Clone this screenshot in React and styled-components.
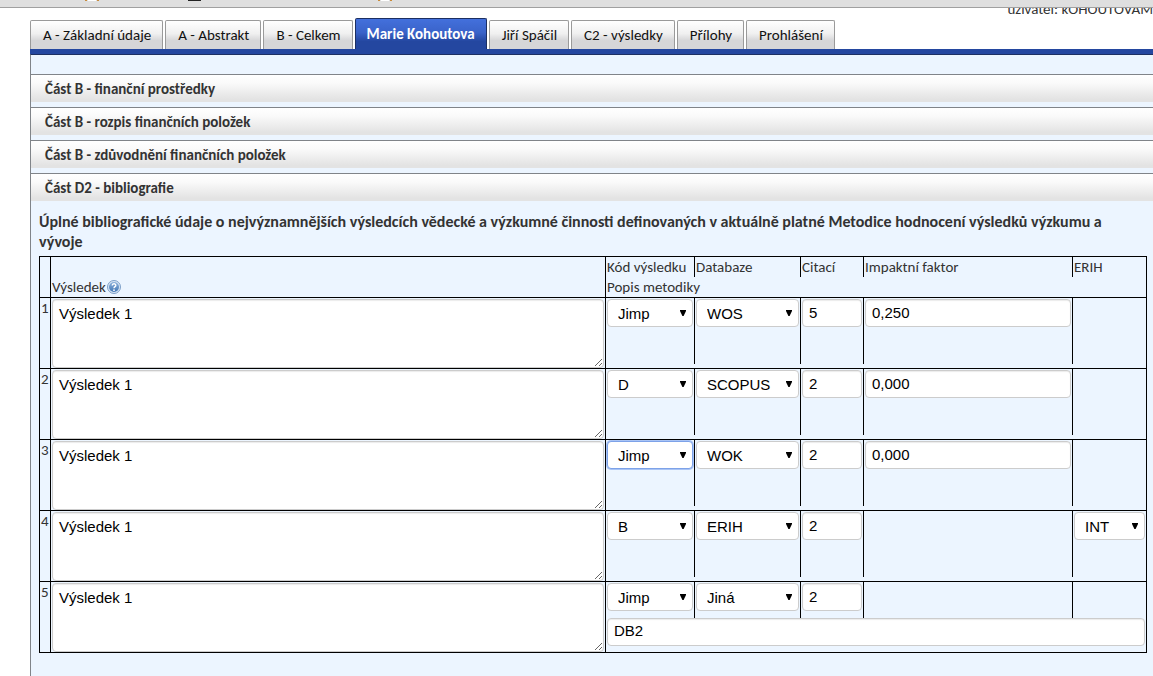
import React, { useState } from 'react';
import styled, { createGlobalStyle } from 'styled-components';

const tabs = [
    'A - Základní údaje',
    'A - Abstrakt',
    'B - Celkem',
    'Marie Kohoutova',
    'Jiří Spáčil',
    'C2 - výsledky',
    'Přílohy',
    'Prohlášení',
];

const sections = [
    'Část B - finanční prostředky',
    'Část B - rozpis finančních položek',
    'Část B - zdůvodnění finančních položek',
    'Část D2 - bibliografie',
];

const kinds = ['Jimp', 'D', 'B'];
const databases = ['WOS', 'SCOPUS', 'WOK', 'ERIH', 'Jiná'];
const erihs = ['INT', 'NAT'];

const results = [
    { text: 'Výsledek 1', kind: 'Jimp', database: 'WOS', citations: '5', impact: '0,250' },
    { text: 'Výsledek 1', kind: 'D', database: 'SCOPUS', citations: '2', impact: '0,000' },
    { text: 'Výsledek 1', kind: 'Jimp', database: 'WOK', citations: '2', impact: '0,000', active: true },
    { text: 'Výsledek 1', kind: 'B', database: 'ERIH', citations: '2', erih: 'INT' },
    { text: 'Výsledek 1', kind: 'Jimp', database: 'Jiná', citations: '2', other: 'DB2' },
];

function Dropdown({ label, value, options, active }) {
    return (
        <SelectBox>
            <Select aria-label={label} defaultValue={value} $active={active}>
                {options.map((option) => <option key={option}>{option}</option>)}
            </Select>
            <svg width="6" height="6" viewBox="0 0 6 6" aria-hidden="true">
                <path d="M0 0H6V1L3.6 6H2.4L0 1Z" fill="#000"/>
            </svg>
        </SelectBox>
    );
}

function HelpIcon() {
    return (
        <svg width="14" height="14" viewBox="0 0 14 14" aria-hidden="true">
            <defs>
                <linearGradient id="help" x1="0" y1="0" x2="0" y2="1">
                    <stop offset="0" stopColor="#8fb3dc"/>
                    <stop offset="1" stopColor="#4377b5"/>
                </linearGradient>
            </defs>
            <circle cx="7" cy="7" r="6.5" fill="#d8e5f3" stroke="#7d9fc8"/>
            <circle cx="7" cy="7" r="5" fill="url(#help)"/>
            <path d="M5.2 5.6C5.2 3.2 8.9 3.3 8.8 5.4C8.8 6.6 7 6.6 7 8.2" fill="none" stroke="#fff" strokeWidth="1.4"/>
            <circle cx="7" cy="10.2" r="0.9" fill="#fff"/>
        </svg>
    );
}

function Result({ item, number }) {
    return (
        <tbody>
            <Row $height={item.other ? 36 : 66}>
                <NumberCell rowSpan={2}>{number}</NumberCell>
                <td rowSpan={2}><TextArea aria-label="Výsledek" defaultValue={item.text}/></td>
                <td><Dropdown label="Kód výsledku" value={item.kind} options={kinds} active={item.active}/></td>
                <td><Dropdown label="Databaze" value={item.database} options={databases}/></td>
                <td><Input aria-label="Citací" defaultValue={item.citations}/></td>
                <td>{item.impact && <Input aria-label="Impaktní faktor" defaultValue={item.impact}/>}</td>
                <td>{item.erih && <Dropdown label="ERIH" value={item.erih} options={erihs}/>}</td>
            </Row>
            <Row $height={item.other ? 35 : 5}>
                <WideCell colSpan={5}>
                    {item.other && <Input aria-label="Popis metodiky" defaultValue={item.other}/>}
                </WideCell>
            </Row>
        </tbody>
    );
}

export default function App() {
    const [currentTab,setCurrentTab] = useState(3);
    const [open,setOpen] = useState(3);
    return (
        <Page>
            <GlobalStyle/>
            <TopBar>
                <svg width="310" height="2" viewBox="0 0 310 2" aria-hidden="true">
                    <path d="M0 0H2V1H0ZM12 0H14V1H12ZM293 0H295V1H293ZM305 0H307V1H305Z" fill="#c98b3a"/>
                    <path d="M3 0H11V1H3ZM296 0H304V1H296Z" fill="#fff"/>
                    <path d="M103 0H116V1H103Z" fill="#222"/>
                </svg>
            </TopBar>
            <UserLine><span>uživatel: kOHOUTOVAM</span></UserLine>
            <TabList role="tablist">
                {tabs.map((tab,index) => (
                    <Tab
                        key={tab}
                        type="button"
                        role="tab"
                        aria-selected={index === currentTab}
                        $selected={index === currentTab}
                        onClick={() => setCurrentTab(index)}
                    >
                        {tab}
                    </Tab>
                ))}
            </TabList>
            <Panel>
                {sections.map((section,index) => (
                    <SectionHeader key={section}>
                        <button type="button" aria-expanded={index === open} onClick={() => setOpen(index)}>
                            {section}
                        </button>
                    </SectionHeader>
                ))}
                {open === 3 && (
                    <Content>
                        <h3>
                            Úplné bibliografické údaje o nejvýznamnějších výsledcích vědecké a výzkumné činnosti
                            definovaných v aktuálně platné Metodice hodnocení výsledků výzkumu a vývoje
                        </h3>
                        <Table>
                            <colgroup>
                                <Col $width={11}/>
                                <col/>
                                <Col $width={89}/>
                                <Col $width={106}/>
                                <Col $width={63}/>
                                <Col $width={209}/>
                                <Col $width={74}/>
                            </colgroup>
                            <thead>
                                <Row $height={20}>
                                    <th rowSpan={2}/>
                                    <ResultHead rowSpan={2}>
                                        <div>Výsledek<HelpIcon/></div>
                                    </ResultHead>
                                    <th>Kód výsledku</th>
                                    <th>Databaze</th>
                                    <th>Citací</th>
                                    <th>Impaktní faktor</th>
                                    <th>ERIH</th>
                                </Row>
                                <Row $height={20}>
                                    <WideHead colSpan={5}>Popis metodiky</WideHead>
                                </Row>
                            </thead>
                            {results.map((item,index) => (
                                <Result key={index} item={item} number={index + 1}/>
                            ))}
                        </Table>
                    </Content>
                )}
            </Panel>
        </Page>
    );
}

const GlobalStyle = createGlobalStyle`
    body{
        margin:0;
        background-color:#fff;
        color:#333;
        font-family:Carlito, Calibri, Lato, sans-serif;
        font-size:15px;
        line-height:20px;
    }
    *{
        box-sizing:border-box;
    }
`;

const Page = styled.div`
    display:flex;
    flex-direction:column;
    min-height:100vh;
    overflow:hidden;
`;

const TopBar = styled.div`
    height:8px;
    padding-left:85px;
    background-color:#dfdfdf;
    border-bottom:1px solid #a0a0a0;
    svg{
        display:block;
    }
`;

const UserLine = styled.div`
    display:flex;
    justify-content:flex-end;
    align-items:flex-end;
    height:9px;
    overflow:hidden;
    line-height:16px;
    white-space:nowrap;
`;

const TabList = styled.div`
    display:flex;
    align-items:flex-end;
    gap:2px;
    height:37px;
    margin-left:30px;
    flex-shrink:0;
    border-bottom:5px solid #2447a0;
`;

const Tab = styled.button`
    height:${props => props.$selected ? '31px' : '29px'};
    padding:${props => props.$selected ? '0 11px' : '0 11px 0 12px'};
    border:1px solid ${props => props.$selected ? '#1c2f62' : '#9a9a9a'};
    border-bottom:0;
    border-radius:2px 2px 0 0;
    background:${props => props.$selected
        ? 'linear-gradient(#4370dc, #3a63c9 45%, #2447a0 75%)'
        : 'linear-gradient(#fff, #f0f0f0 45%, #d6d6d8 70%)'};
    color:${props => props.$selected ? '#fff' : '#111'};
    font-family:inherit;
    font-size:15px;
    font-weight:${props => props.$selected ? 700 : 400};
    white-space:nowrap;
    cursor:pointer;
`;

const Panel = styled.main`
    flex-grow:1;
    margin-left:30px;
    padding-top:19px;
    border-top:1px solid #1c2f62;
    border-left:1px solid #808489;
    background-color:#ecf5ff;
`;

const SectionHeader = styled.h2`
    margin:0 0 5px;
    border-top:1px solid #808489;
    font-size:15px;
    button{
        display:block;
        width:100%;
        height:27px;
        padding:0 14px;
        border:0;
        background:linear-gradient(#fff, #fafafa 30%, #e3e3e3 90%);
        color:#333;
        font-family:inherit;
        font-size:15px;
        font-weight:700;
        text-align:left;
        cursor:pointer;
    }
`;

const Content = styled.section`
    padding:6px 6px 23px 8px;
    h3{
        margin:0 0 4px;
        font-size:16px;
        font-weight:700;
        line-height:20px;
    }
`;

const Table = styled.table`
    width:100%;
    table-layout:fixed;
    border-collapse:collapse;
    border:1px solid #000;
    th,
    td{
        padding:1px 1px 0;
        border-top:1px solid #000;
        border-left:1px solid #000;
        vertical-align:top;
    }
    th{
        padding:0 0 0 1px;
        font-weight:400;
        text-align:left;
        white-space:nowrap;
    }
`;

const Col = styled.col`
    width:${props => props.$width}px;
`;

const Row = styled.tr`
    height:${props => props.$height}px;
`;

const ResultHead = styled.th`
    && {
        vertical-align:bottom;
    }
    div{
        display:flex;
        align-items:center;
        gap:1px;
    }
`;

const NumberCell = styled.td`
    && {
        padding-top:0;
    }
`;

const WideCell = styled.td`
    && {
        padding-top:0;
        border-top:0;
    }
`;

const WideHead = styled.th`
    && {
        border-top:0;
    }
`;

const TextArea = styled.textarea`
    display:block;
    width:100%;
    height:69px;
    padding:4px 6px;
    border:1px solid #ccc;
    border-radius:4px;
    background-color:#fff;
    box-shadow:inset 0 1px 1px #ececec;
    color:#000;
    font-family:"Liberation Sans", Arial, sans-serif;
    font-size:15px;
    line-height:20px;
`;

const Input = styled.input`
    display:block;
    width:100%;
    height:28px;
    padding:0 6px 2px;
    border:1px solid #ccc;
    border-radius:4px;
    background-color:#fff;
    box-shadow:inset 0 1px 1px #ececec;
    color:#000;
    font-family:"Liberation Sans", Arial, sans-serif;
    font-size:15px;
`;

const SelectBox = styled.div`
    position:relative;
    svg{
        position:absolute;
        top:11px;
        right:7px;
        pointer-events:none;
    }
`;

const Select = styled.select`
    display:block;
    width:100%;
    height:28px;
    padding:1px 10px 0;
    appearance:none;
    border:1px solid ${props => props.$active ? '#7da2e8' : '#ccc'};
    border-radius:4px;
    background-color:#fff;
    box-shadow:${props => props.$active ? '0 0 0 1px #a9c4f5' : 'none'};
    color:#000;
    font-family:"Liberation Sans", Arial, sans-serif;
    font-size:15px;
`;
